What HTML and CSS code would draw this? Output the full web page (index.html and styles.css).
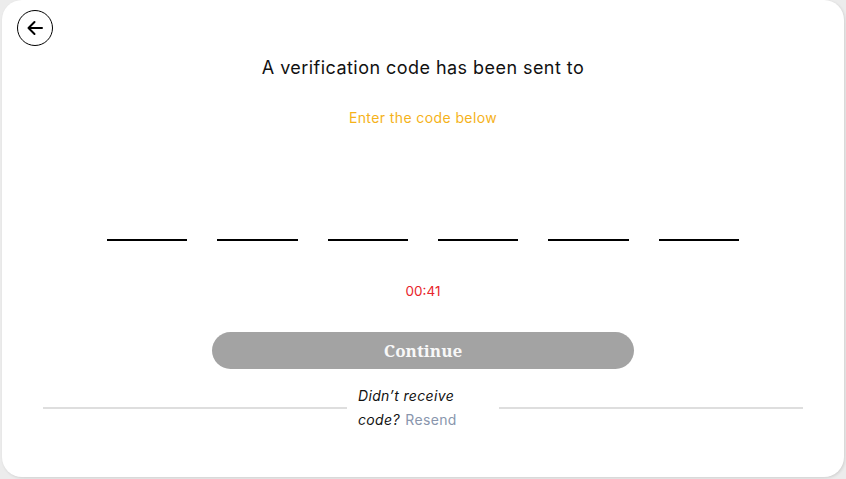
FILE: index.html
```html
<!DOCTYPE html>
<html lang="en">
<head>
<meta charset="utf-8">
<title>Verification</title>
<link rel="stylesheet" href="styles.css">
</head>
<body>
<div class="card">
  <button class="back" aria-label="Back">
    <svg width="20" height="20" viewBox="0 0 20 20" fill="none" stroke="#000" stroke-width="2" stroke-linecap="round" stroke-linejoin="round"><path d="M17 10H3.5M9.5 4L3.5 10L9.5 16"/></svg>
  </button>
  <h1 class="title">A verification code has been sent to</h1>
  <p class="subtitle">Enter the code below</p>
  <div class="code">
    <span class="digit"></span>
    <span class="digit"></span>
    <span class="digit"></span>
    <span class="digit"></span>
    <span class="digit"></span>
    <span class="digit"></span>
  </div>
  <p class="timer">00:41</p>
  <button class="continue">Continue</button>
  <div class="divider">
    <span class="line"></span>
    <p class="resend"><em class="ask">Didn’t receive</em><br><em class="ask">code?</em> <span class="link">Resend</span></p>
    <span class="line"></span>
  </div>
</div>
</body>
</html>
```

FILE: styles.css
```css
* { box-sizing: border-box; }
html, body { margin: 0; padding: 0; }
body {
  background: #ececec;
  width: 846px;
  height: 479px;
  overflow: hidden;
  font-family: "Inter", "Noto Sans", sans-serif;
}
.card {
  width: 842px;
  height: 477px;
  margin-left: 2px;
  background: #fff;
  border-radius: 20px;
  box-shadow: 1px 1px 3px rgba(0,0,0,0.12);
  display: flex;
  flex-direction: column;
  align-items: center;
  padding-top: 10px;
  position: relative;
}
.back {
  align-self: flex-start;
  margin-left: 15px;
  width: 36px;
  height: 36px;
  border: 1px solid #000;
  border-radius: 50%;
  background: #fff;
  padding: 0;
  display: flex;
  align-items: center;
  justify-content: center;
}
.title {
  margin: 8px 0 0;
  font-size: 18px;
  line-height: 27px;
  font-weight: 400;
  color: #111;
  letter-spacing: 0.45px;
}
.subtitle {
  margin: 26px 0 0;
  font-size: 14px;
  line-height: 21px;
  color: #f5b21a;
  letter-spacing: 0.4px;
}
.code {
  margin-top: 72px;
  display: flex;
  gap: 30px;
}
.digit {
  width: 80.4px;
  height: 41px;
  border-bottom: 2px solid #000;
}
.timer {
  margin: 40px 0 0;
  font-size: 13.5px;
  line-height: 21px;
  color: #e8252b;
}
.continue {
  margin-top: 30px;
  width: 422px;
  height: 37px;
  border: none;
  border-radius: 19px;
  background: #a3a3a3;
  color: #f8f8f8;
  font-family: "Noto Serif", "DejaVu Serif", serif;
  font-weight: 700;
  font-size: 17px;
}
.divider {
  margin-top: 15px;
  width: 760px;
  display: flex;
  align-items: center;
}
.line {
  flex: 1;
  height: 2px;
  background: #dedede;
}
.resend {
  width: 152px;
  margin: 0;
  padding: 0 8px 0 11px;
  font-size: 14px;
  line-height: 24px;
  color: #111;
  letter-spacing: 0.35px;
}
.ask {
  padding-right: 1px;
}
.link {
  color: #8996ad;
}
```
